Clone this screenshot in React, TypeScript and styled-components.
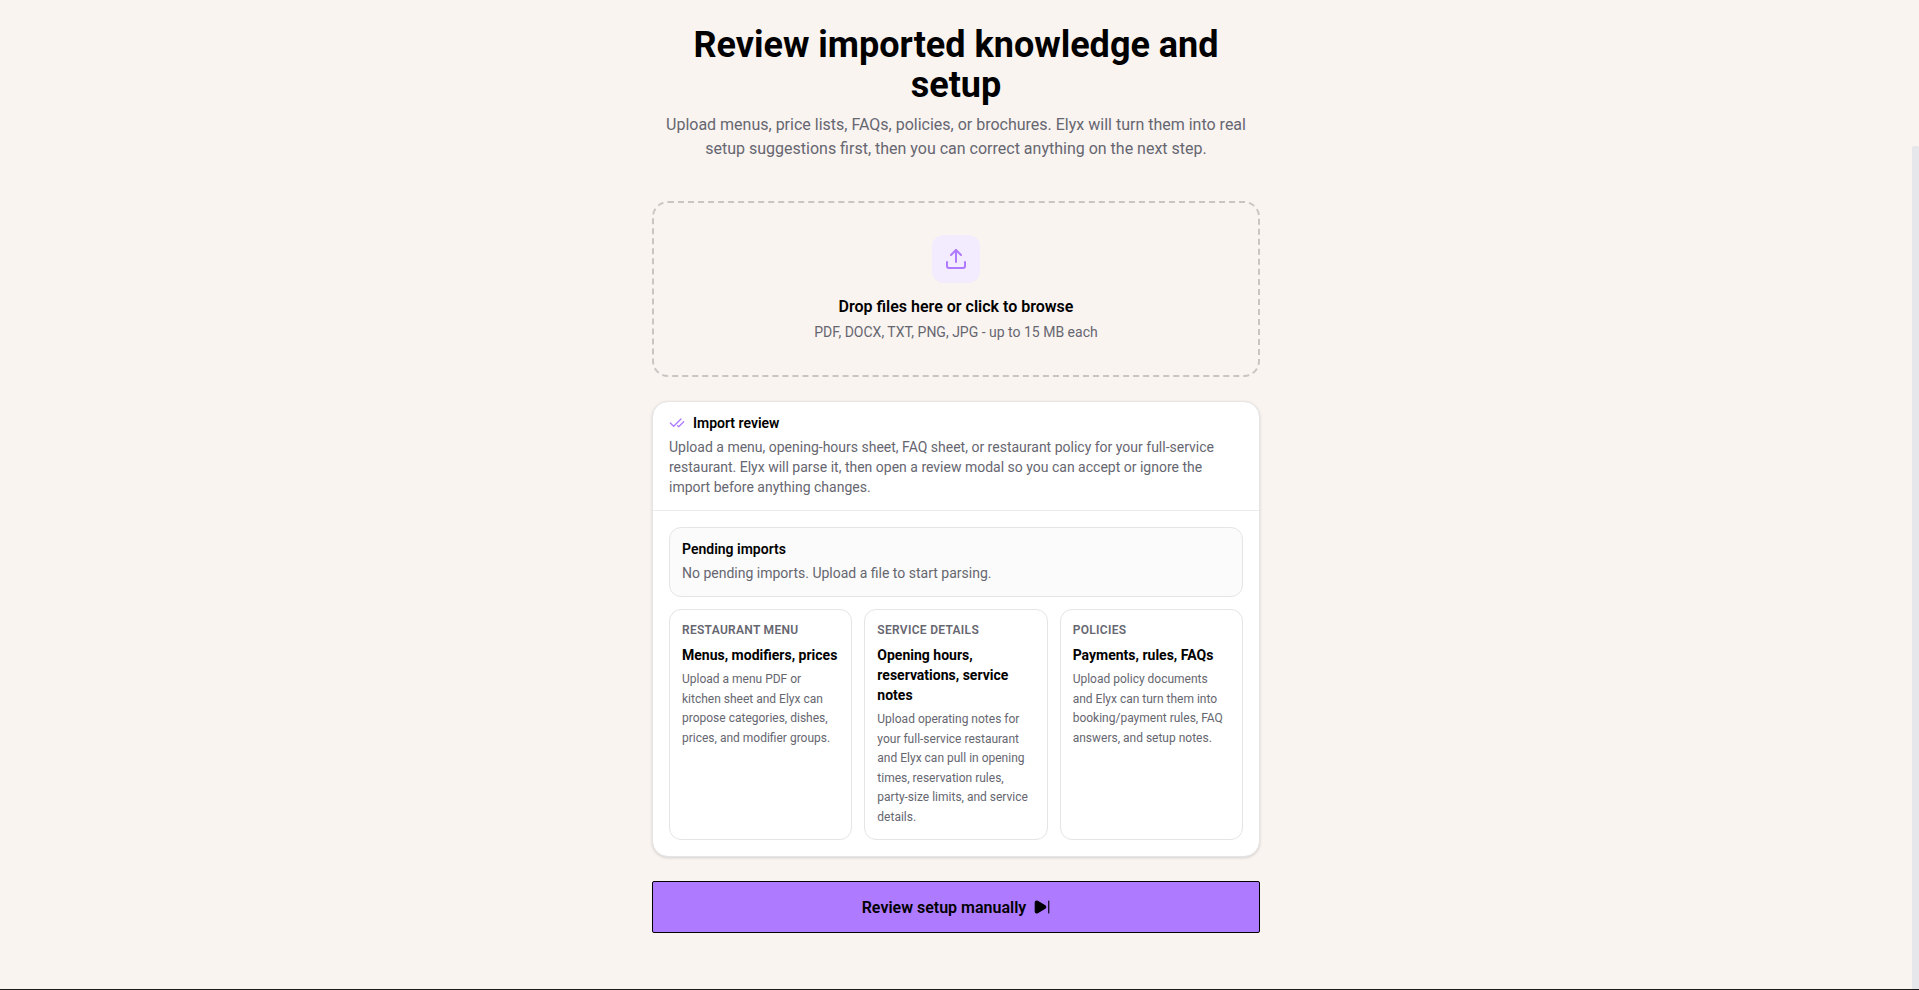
import React from "react";
import styled, { createGlobalStyle } from "styled-components";
import { Upload, CheckCheck, SkipForward } from "lucide-react";

const Global = createGlobalStyle`
  html, body { margin: 0; padding: 0; height: 100%; overflow: hidden; background: #f9f4f0; }
  body { font-family: Roboto, "Liberation Sans", sans-serif; color: #000; }
  * { box-sizing: border-box; }
`;

const Page = styled.div`
  display: flex;
  flex-direction: column;
  height: 990px;
`;
const Body = styled.div`
  flex: 1;
  display: flex;
  min-height: 0;
`;
const Main = styled.main`
  flex: 1;
  display: flex;
  flex-direction: column;
  align-items: center;
  padding-top: 25px;
`;
const Scrollbar = styled.div`
  width: 7px;
  margin-top: 146px;
  background: #e5e7eb;
  border-radius: 2px 2px 0 0;
`;
const BottomRule = styled.div`
  height: 1px;
  background: #1a1a1a;
`;
const Column = styled.div`
  width: 608px;
  display: flex;
  flex-direction: column;
`;
const Heading = styled.header`
  text-align: center;
  margin-bottom: 40px;
`;
const Title = styled.h1`
  margin: 0 0 8px;
  font-size: 36px;
  line-height: 40px;
  font-weight: 700;
  padding: 0 32px;
`;
const Lead = styled.p`
  margin: 0;
  font-size: 16px;
  line-height: 24px;
  color: #666670;
  padding: 0 8px;
`;
const Drop = styled.div`
  border: 2px dashed #c9c5c2;
  border-radius: 16px;
  padding: 32px 32px 33px;
  display: flex;
  flex-direction: column;
  align-items: center;
  margin-bottom: 24px;
`;
const IconTile = styled.div`
  width: 48px;
  height: 48px;
  border-radius: 12px;
  background: #f3ebfe;
  color: #ae7aff;
  display: flex;
  align-items: center;
  justify-content: center;
  margin-bottom: 12px;
`;
const DropTitle = styled.div`
  font-size: 16px;
  line-height: 24px;
  font-weight: 600;
`;
const DropHint = styled.div`
  margin-top: 3px;
  font-size: 14px;
  line-height: 20px;
  color: #666670;
`;
const Panel = styled.section`
  background: #fff;
  border: 1px solid #e5e5e5;
  border-radius: 16px;
  box-shadow: 0 1px 3px rgba(0, 0, 0, 0.15);
  margin-bottom: 24px;
`;
const PanelHead = styled.div`
  padding: 11px 16px 13px;
  border-bottom: 1px solid #ebebeb;
`;
const PanelTitle = styled.div`
  display: flex;
  align-items: center;
  gap: 8px;
  font-size: 14px;
  line-height: 20px;
  font-weight: 600;
  margin-bottom: 4px;
  svg { color: #ae7aff; }
`;
const Muted = styled.p`
  margin: 0;
  font-size: 14px;
  line-height: 20px;
  color: #666670;
`;
const PanelBody = styled.div`
  padding: 16px;
  display: flex;
  flex-direction: column;
  gap: 12px;
`;
const Pending = styled.div`
  background: #fbfbfb;
  border: 1px solid #e5e5e5;
  border-radius: 12px;
  padding: 11px 12px 13px;
`;
const PendingTitle = styled.div`
  font-size: 14px;
  line-height: 20px;
  font-weight: 600;
  margin-bottom: 4px;
`;
const Grid = styled.div`
  display: grid;
  grid-template-columns: repeat(3, 1fr);
  gap: 12px;
`;
const Tile = styled.div`
  border: 1px solid #e5e5e5;
  border-radius: 12px;
  padding: 12px;
`;
const Eyebrow = styled.div`
  font-size: 12px;
  line-height: 16px;
  font-weight: 600;
  letter-spacing: 0.3px;
  text-transform: uppercase;
  color: #666670;
  margin-bottom: 7px;
`;
const TileTitle = styled.div`
  font-size: 14px;
  line-height: 20px;
  font-weight: 700;
  margin-bottom: 5px;
`;
const TileText = styled.p`
  margin: 0;
  font-size: 12px;
  line-height: 19.5px;
  color: #666670;
`;
const Action = styled.button`
  height: 52px;
  border: 1px solid #000;
  border-radius: 2px;
  background: #ae7aff;
  color: #000;
  font-family: inherit;
  font-size: 16px;
  font-weight: 600;
  display: flex;
  align-items: center;
  justify-content: center;
  gap: 8px;
  svg { fill: currentColor; margin: 0 -1px; }
`;

const tiles = [
  {
    label: "Restaurant menu",
    title: "Menus, modifiers, prices",
    text: "Upload a menu PDF or kitchen sheet and Elyx can propose categories, dishes, prices, and modifier groups.",
  },
  {
    label: "Service details",
    title: "Opening hours, reservations, service notes",
    text: "Upload operating notes for your full-service restaurant and Elyx can pull in opening times, reservation rules, party-size limits, and service details.",
  },
  {
    label: "Policies",
    title: "Payments, rules, FAQs",
    text: "Upload policy documents and Elyx can turn them into booking/payment rules, FAQ answers, and setup notes.",
  },
];

export default function App() {
  return (
    <Page>
      <Global />
      <Body>
        <Main>
          <Column>
            <Heading>
              <Title>Review imported knowledge and setup</Title>
              <Lead>
                Upload menus, price lists, FAQs, policies, or brochures. Elyx will turn them into real setup suggestions
                first, then you can correct anything on the next step.
              </Lead>
            </Heading>
            <Drop>
              <IconTile>
                <Upload size={24} />
              </IconTile>
              <DropTitle>Drop files here or click to browse</DropTitle>
              <DropHint>PDF, DOCX, TXT, PNG, JPG - up to 15 MB each</DropHint>
            </Drop>
            <Panel>
              <PanelHead>
                <PanelTitle>
                  <CheckCheck size={16} />
                  Import review
                </PanelTitle>
                <Muted>
                  Upload a menu, opening-hours sheet, FAQ sheet, or restaurant policy for your full-service restaurant.
                  Elyx will parse it, then open a review modal so you can accept or ignore the import before anything
                  changes.
                </Muted>
              </PanelHead>
              <PanelBody>
                <Pending>
                  <PendingTitle>Pending imports</PendingTitle>
                  <Muted>No pending imports. Upload a file to start parsing.</Muted>
                </Pending>
                <Grid>
                  {tiles.map((t) => (
                    <Tile key={t.label}>
                      <Eyebrow>{t.label}</Eyebrow>
                      <TileTitle>{t.title}</TileTitle>
                      <TileText>{t.text}</TileText>
                    </Tile>
                  ))}
                </Grid>
              </PanelBody>
            </Panel>
            <Action>
              Review setup manually
              <SkipForward size={18} strokeWidth={1.5} />
            </Action>
          </Column>
        </Main>
        <Scrollbar />
      </Body>
      <BottomRule />
    </Page>
  );
}
